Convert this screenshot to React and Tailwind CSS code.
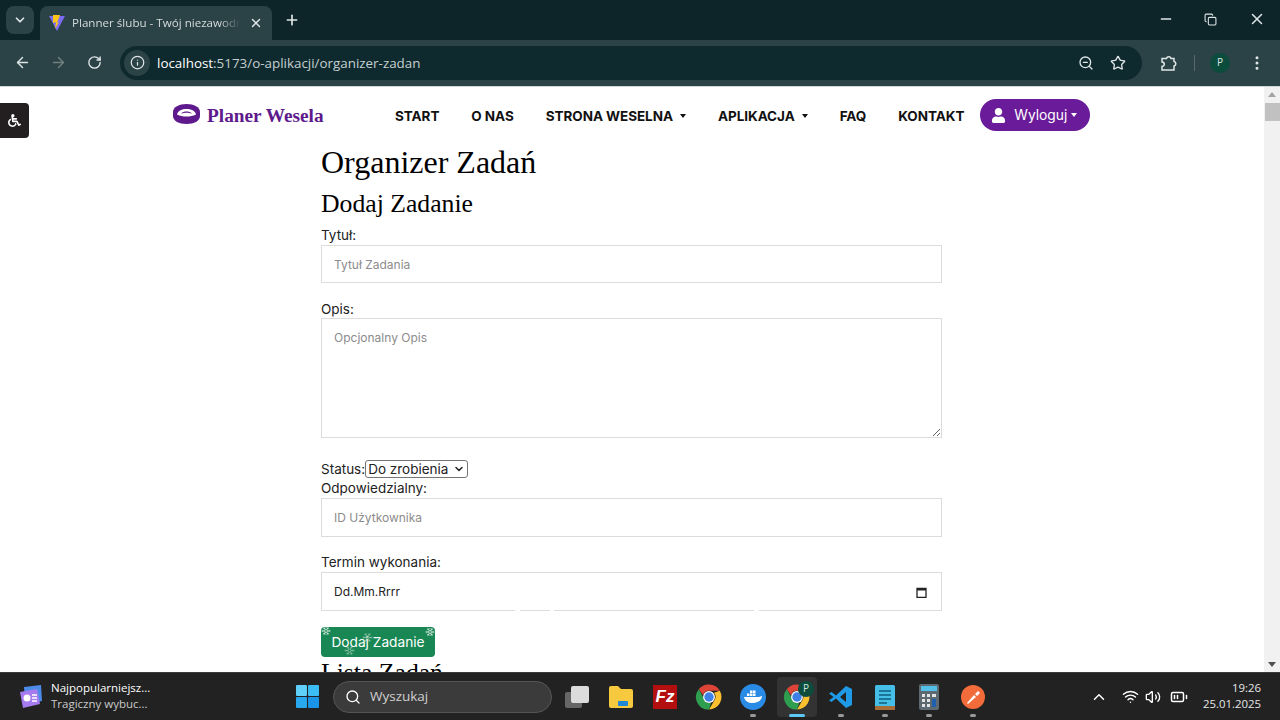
import {
  ArrowLeft, ArrowRight, BatteryMedium, ChevronDown, ChevronUp, Copy,
  EllipsisVertical, Info, Minus, Plus, RotateCw, Search, Snowflake, Star, Volume2, Wifi, X, ZoomOut,
} from "lucide-react";
import { FaUser, FaWheelchair } from "react-icons/fa";

const navItems = [
  { label: "START" },
  { label: "O NAS" },
  { label: "STRONA WESELNA", caret: true },
  { label: "APLIKACJA", caret: true },
  { label: "FAQ" },
  { label: "KONTAKT" },
];

function ViteLogo() {
  return (
    <svg width="18" height="18" viewBox="0 0 18 18">
      <path d="M1 2 L17 2 L9 17 Z" fill="#7c6cf5" />
      <path d="M5 1 L12 1 L9 9 L11 8 L7 15 L8 8 L5 9 Z" fill="#ffc517" />
    </svg>
  );
}

function ChromeIcon({ size = 26 }) {
  return (
    <svg width={size} height={size} viewBox="0 0 48 48">
      <path d="M24 4a20 20 0 0 1 17.3 10H24a10 10 0 0 0-9.5 7L7.6 11.5A20 20 0 0 1 24 4z" fill="#dd4437" />
      <path d="M41.3 14A20 20 0 0 1 24 44l8.700-15A10 10 0 0 0 32 17z" fill="#fbc02d" />
      <path d="M24 44A20 20 0 0 1 7.600 11.500l8.700 15.500a10 10 0 0 0 11 6.500z" fill="#2e9e4f" />
      <circle cx="24" cy="24" r="9.500" fill="#fff" />
      <circle cx="24" cy="24" r="7.500" fill="#3f7fe8" />
    </svg>
  );
}

function TaskIcon({ children, running, active }) {
  return (
    <div className={`relative flex h-10 w-10 mx-[2px] items-center justify-center rounded ${active ? "bg-[#333333]" : ""}`}>
      {children}
      {running && (
        <div className={`absolute bottom-0 h-[3px] rounded-full ${active ? "w-4 bg-[#5cc8f5]" : "w-[6px] bg-[#9a9a9a]"}`} />
      )}
    </div>
  );
}

function BrowserBar() {
  return (
    <div className="shrink-0 bg-[#0d2428] text-[#dfe6e7]">
      <div className="flex h-10 items-end pl-[6px]">
        <div className="mb-[6px] flex h-7 w-7 items-center justify-center rounded-lg bg-[#2b4246]">
          <ChevronDown size={14} strokeWidth={3} />
        </div>
        <div className="ml-[6px] flex h-[34px] w-[232px] items-center rounded-t-lg bg-[#2b4246] pl-2 pr-2">
          <ViteLogo />
          <span className="ml-[6px] w-[168px] overflow-hidden whitespace-nowrap text-[11.6px] text-[#d5dcdd] [font-family:'Open_Sans',sans-serif] [mask-image:linear-gradient(to_right,black_88%,transparent)]">
            Planner ślubu - Twój niezawodny
          </span>
          <X size={14} strokeWidth={2.5} className="ml-[9px]" />
        </div>
        <Plus size={16} strokeWidth={2.5} className="mb-3 ml-3" />
        <div className="mb-3 ml-auto flex items-center pr-[14px]">
          <Minus size={16} />
          <Copy size={13} className="ml-[30px]" />
          <X size={18} className="ml-[31px]" />
        </div>
      </div>
      <div className="flex h-[46px] items-center bg-[#2b4246] pb-[1px] pl-[14px]">
        <ArrowLeft size={17} strokeWidth={2} />
        <ArrowRight size={17} strokeWidth={2} className="ml-[19px] text-[#71817f]" />
        <RotateCw size={15} strokeWidth={2.2} className="ml-[20px]" />
        <div className="ml-[18px] flex h-[34px] w-[1022px] items-center rounded-full bg-[#0f2a2e] pl-[4px] pr-[16px]">
          <div className="flex h-[26px] w-[26px] items-center justify-center rounded-full bg-[#2b4246]">
            <Info size={15} />
          </div>
          <span className="ml-[7px] pt-[1px] text-[13.4px] text-white [font-family:'Open_Sans',sans-serif]">
            localhost<span className="text-[#c5cfd0]">:5173/o-aplikacji/organizer-zadan</span>
          </span>
          <ZoomOut size={16} className="ml-auto" />
          <Star size={16} strokeWidth={2} className="ml-[16px]" />
        </div>
        {/* extensions icon, chrome's own shape isn't in lucide */}
        <svg width="18" height="18" viewBox="0 0 18 18" fill="none" stroke="currentColor" strokeWidth="1.500" className="ml-[18px]">
          <path d="M2 4.500h4.500a2.300 2.300 0 0 1 4.500 0H14v3a2.300 2.300 0 0 1 0 4.500v4H2v-3.500a2.200 2.200 0 0 0 0-4.500z" />
        </svg>
        <div className="ml-[16px] h-4 w-px bg-[#566a6d]" />
        <div className="ml-[15px] flex h-5 w-5 items-center justify-center rounded-full bg-[#0b4c3c] text-[10px] [font-family:'Open_Sans',sans-serif]">
          P
        </div>
        <EllipsisVertical size={18} className="ml-[18px]" />
      </div>
    </div>
  );
}

function Navbar() {
  return (
    <nav className="flex h-[56px] items-center pl-[173px]">
      <svg width="27" height="20" viewBox="0 0 27 20" className="mb-[3px]">
        <path d="M13.500 0C6 0 0 3 0 8v4c0 5 6 8 13.500 8S27 17 27 12V8c0-5-6-8-13.500-8z" fill="#5e1a8c" />
        <path d="M4 10.500C5 6.500 9 5 13.500 5S22 6.500 23 10.500C20 12 17 12.500 13.500 12.500S7 12 4 10.500z" fill="#fff" />
        <path d="M8 9.500C9.500 8 11.500 7.500 13.500 7.500S17.500 8 19 9.500C17 9 15 8.800 13.500 8.800S10 9 8 9.500z" fill="#5e1a8c" />
      </svg>
      <span className="ml-[7px] w-[172px] whitespace-nowrap pt-[2px] text-[19.3px] font-bold text-[#5e1a8c] [font-family:'Liberation_Serif',serif]">
        Planer Wesela
      </span>
      <div className="flex items-center pt-[2px] text-[13.5px] font-bold tracking-[-0.05px] text-[#111] [font-family:Inter,sans-serif]">
        {navItems.map((item) => (
          <div key={item.label} className="flex items-center whitespace-nowrap px-4">
            {item.label}
            {item.caret && <span className="ml-[7px] h-0 w-0 border-x-[3.5px] border-t-[4px] border-x-transparent border-t-[#111]" />}
          </div>
        ))}
      </div>
      <button className="flex h-8 w-[110px] items-center rounded-full bg-[#6a1b9a] pl-[11px] text-[13.800px] text-white [font-family:Inter,sans-serif]">
        <FaUser size={15} />
        <span className="ml-[8px]">Wyloguj</span>
        <span className="ml-[4px] h-0 w-0 border-x-[3.5px] border-t-[4px] border-x-transparent border-t-white" />
      </button>
    </nav>
  );
}

function Field({ label, children, className = "", labelClass = "leading-[19px]" }) {
  return (
    <div className={className}>
      <label className={`block h-[19px] ${labelClass}`}>{label}</label>
      {children}
    </div>
  );
}

const inputClass =
  "block w-full border border-[#dcdcdc] px-3 text-[12px] outline-none placeholder:text-[#8c8c8c]";

function TaskForm() {
  return (
    <main className="ml-[321px] w-[621px] text-[13.5px] text-[#222] [font-family:Inter,sans-serif]">
      <h1 className="text-[32px] leading-[38px] text-black [font-family:'Liberation_Serif',serif]">Organizer Zadań</h1>
      <h2 className="mt-[3px] text-[25.700px] leading-[40px] text-black [font-family:'Liberation_Serif',serif]">Dodaj Zadanie</h2>
      <Field label="Tytuł:" className="mt-[1px]" labelClass="leading-[21px]">
        <input className={`${inputClass} mt-[1px] h-[38px] pt-[1px]`} placeholder="Tytuł Zadania" />
      </Field>
      <Field label="Opis:" className="mt-[16px]" labelClass="leading-[21px]">
        <textarea className={`${inputClass} h-[120px] pt-[10px]`} placeholder="Opcjonalny Opis" />
      </Field>
      <div className="mt-[22px] flex h-[18px] items-center">
        <label>Status:</label>
        <div className="relative">
          <select className="block h-[18px] w-[103px] appearance-none rounded-[3px] border border-[#767676] bg-white py-0 pl-[2px] text-[13.5px] leading-[14px]" defaultValue="todo">
            <option value="todo">Do zrobienia</option>
          </select>
          <ChevronDown size={12} strokeWidth={3} className="pointer-events-none absolute right-[3px] top-[3px]" />
        </div>
      </div>
      <Field label="Odpowiedzialny:" className="mt-[1px]">
        <input className={`${inputClass} h-[39px]`} placeholder="ID Użytkownika" />
      </Field>
      <Field label="Termin wykonania:" className="mt-[16px]">
        <div className="relative flex h-[39px] items-center justify-between border border-[#dcdcdc] pl-3 pr-[14px] pt-[1px] text-[12px]">
          Dd.Mm.Rrrr
          <svg width="11" height="11" viewBox="0 0 11 11">
            <path d="M1 1.500h9v9H1z" fill="none" stroke="#222" strokeWidth="1.300" />
            <path d="M1 1h9v2.500H1z" fill="#222" />
          </svg>
          <div className="absolute -bottom-px left-[193px] h-[2px] w-[5px] bg-white" />
          <div className="absolute -bottom-px left-[228px] h-[2px] w-[4px] bg-white" />
          <div className="absolute -bottom-px left-[432px] h-[2px] w-[5px] bg-white" />
        </div>
      </Field>
      <button className="relative mt-[16px] block h-[30px] w-[114px] overflow-hidden rounded-[4px] bg-[#198754] text-[13.7px] text-white">
        Dodaj Zadanie
        <Snowflake size={10} className="absolute left-0 top-[-1px] text-white/70" />
        <Snowflake size={11} className="absolute left-[41px] top-[5px] text-white/35" />
        <Snowflake size={11} className="absolute left-[23px] top-[18px] text-white/35" />
        <Snowflake size={10} className="absolute right-0 top-0 text-white/70" />
      </button>
      <h2 className="text-[25.700px] leading-[32px] text-black [font-family:'Liberation_Serif',serif]">Lista Zadań</h2>
    </main>
  );
}

function Scrollbar() {
  return (
    <div className="flex w-4 shrink-0 flex-col items-center justify-between bg-[#f1f1f1] py-[5px]">
      <div className="flex w-full flex-col items-center">
        <span className="h-0 w-0 border-x-[4px] border-b-[5px] border-x-transparent border-b-[#a3a3a3]" />
        <div className="mt-[6px] h-[18px] w-[15px] bg-[#c1c1c1]" />
      </div>
      <span className="h-0 w-0 border-x-[4px] border-t-[5px] border-x-transparent border-t-[#505050]" />
    </div>
  );
}

function Taskbar() {
  return (
    <div className="flex h-[48px] shrink-0 items-center border-t border-[#3a3a3a] bg-[#222222] text-white [font-family:'Open_Sans',sans-serif]">
      <svg width="24" height="26" viewBox="0 0 24 26" className="ml-[19px]">
        <path d="M5 3 L22 1 L23 17 L6 20 Z" fill="#4d8be8" />
        <path d="M1 8 L18 5 L21 20 L4 24 Z" fill="#a77bf0" />
        <circle cx="8" cy="14" r="3.500" fill="#fff" />
        <path d="M13 11h5M13 14h5M13 17h5" stroke="#fff" strokeWidth="1.300" />
      </svg>
      <div className="mb-[2px] ml-[8px] w-[113px] text-[11.5px] leading-[16px]">
        <div>Najpopularniejsz...</div>
        <div className="text-[#c9c9c9]">Tragiczny wybuc...</div>
      </div>
      <svg width="23" height="23" viewBox="0 0 22 22" className="ml-[132px]">
        <rect x="0" y="0" width="10.500" height="10.500" rx="1" fill="#5fd0f8" />
        <rect x="11.500" y="0" width="10.500" height="10.500" rx="1" fill="#3cbdf5" />
        <rect x="0" y="11.500" width="10.500" height="10.500" rx="1" fill="#2aa8ef" />
        <rect x="11.500" y="11.500" width="10.500" height="10.500" rx="1" fill="#1a94e8" />
      </svg>
      <div className="ml-[14px] flex h-8 w-[219px] items-center rounded-full border border-[#555] bg-[#3b3b3b] pl-[11px] text-[13.5px] text-[#d0d0d0]">
        <Search size={16} className="text-white" />
        <span className="ml-[9px]">Wyszukaj</span>
      </div>
      <div className="ml-[3px] flex items-center">
        <TaskIcon>
          <svg width="26" height="24" viewBox="0 0 26 24">
            <rect x="1" y="7" width="17" height="16" rx="2" fill="#666" />
            <rect x="7" y="1" width="18" height="17" rx="2" fill="#dcdcdc" />
          </svg>
        </TaskIcon>
        <TaskIcon>
          <svg width="26" height="24" viewBox="0 0 26 24">
            <path d="M1 3a2 2 0 0 1 2-2h7l3 3h10a2 2 0 0 1 2 2v15a2 2 0 0 1-2 2H3a2 2 0 0 1-2-2z" fill="#f7c93e" />
            <rect x="10" y="16" width="10" height="5" rx="1" fill="#1f87d6" />
          </svg>
        </TaskIcon>
        <TaskIcon>
          <div className="flex h-6 w-6 items-center justify-center bg-[#b30f0f] text-[17px] font-bold italic leading-none text-white [font-family:'Liberation_Sans',sans-serif]">
            Fz
          </div>
        </TaskIcon>
        <TaskIcon><ChromeIcon size={30} /></TaskIcon>
        <TaskIcon running>
          <svg width="26" height="26" viewBox="0 0 26 26">
            <circle cx="13" cy="13" r="13" fill="#2a8be6" />
            <path d="M4 13h15c1 0 2-.8 3-1 0 3-3 7-9 7-5 0-8-2-9-6z" fill="#fff" />
            <path d="M7 9.500h2.500V12H7zM10 9.500h2.500V12H10zM13 9.500h2.500V12H13zM10 6.500h2.500V9H10zM13 6.500h2.500V9H13z" fill="#fff" />
          </svg>
        </TaskIcon>
        <TaskIcon running active>
          <ChromeIcon size={30} />
          <div className="absolute right-[3px] top-[4px] flex h-4 w-4 items-center justify-center rounded-full bg-[#0b4c3c] text-[10px] text-[#cfe3dc]">
            P
          </div>
        </TaskIcon>
        <TaskIcon running>
          <svg width="24" height="24" viewBox="0 0 24 24">
            <path d="M17 1l6 3v16l-6 3L7 13.500 2.500 17 0 15.500 4.500 12 0 8.500 2.500 7 7 10.500z" fill="#1e9ae6" />
            <path d="M17 7l-6 5 6 5z" fill="#222" />
          </svg>
        </TaskIcon>
        <TaskIcon running>
          <svg width="20" height="26" viewBox="0 0 20 26">
            <rect x="0" y="1" width="20" height="25" rx="1.500" fill="#45bfe8" />
            <rect x="0" y="22" width="20" height="4" fill="#a86e3a" />
            <path d="M4 7h12M4 11h12M4 15h12M4 19h8" stroke="#0d5d7c" strokeWidth="1.300" />
          </svg>
        </TaskIcon>
        <TaskIcon running>
          <svg width="20" height="26" viewBox="0 0 20 26">
            <rect width="20" height="26" rx="2" fill="#5e6a72" />
            <rect x="2" y="2" width="16" height="5" fill="#52c0e8" />
            <path d="M3 10h3v3H3zM8 10h3v3H8zM3 15h3v3H3zM8 15h3v3H8zM3 20h3v3H3zM8 20h3v3H8z" fill="#e4e4e4" />
            <rect x="13" y="15" width="4" height="8" fill="#1f5fae" />
            <rect x="13" y="10" width="4" height="3" fill="#e4e4e4" />
          </svg>
        </TaskIcon>
        <TaskIcon running>
          <svg width="24" height="24" viewBox="0 0 24 24">
            <circle cx="12" cy="12" r="12" fill="#f26b3a" />
            <path d="M6 18l7-8 2 2-8 7zM14 9l3-3 2 2-3 3z" fill="#fff" />
          </svg>
        </TaskIcon>
      </div>
      <ChevronUp size={18} className="ml-[95px]" />
      <Wifi size={17} className="ml-[14px]" />
      <Volume2 size={16} className="ml-[6px]" />
      <BatteryMedium size={18} className="ml-[9px]" />
      <div className="ml-[15px] mb-[2px] w-[58px] whitespace-nowrap text-right text-[11.4px] leading-[16px] text-[#e6e6e6]">
        <div>19:26</div>
        <div>25.01.2025</div>
      </div>
    </div>
  );
}

export default function App() {
  return (
    <div className="flex h-[720px] flex-col overflow-hidden bg-white">
      <BrowserBar />
      <div className="h-px shrink-0 bg-[#cfd5d6]" />
      <div className="relative flex min-h-0 flex-1">
        <div className="min-w-0 flex-1 overflow-hidden">
          <Navbar />
          <TaskForm />
        </div>
        <Scrollbar />
        <div className="absolute left-0 top-[16px] flex h-[35px] w-[29px] items-center justify-center rounded-r bg-[#231f20] text-white">
          <FaWheelchair size={13} />
        </div>
      </div>
      <Taskbar />
    </div>
  );
}
